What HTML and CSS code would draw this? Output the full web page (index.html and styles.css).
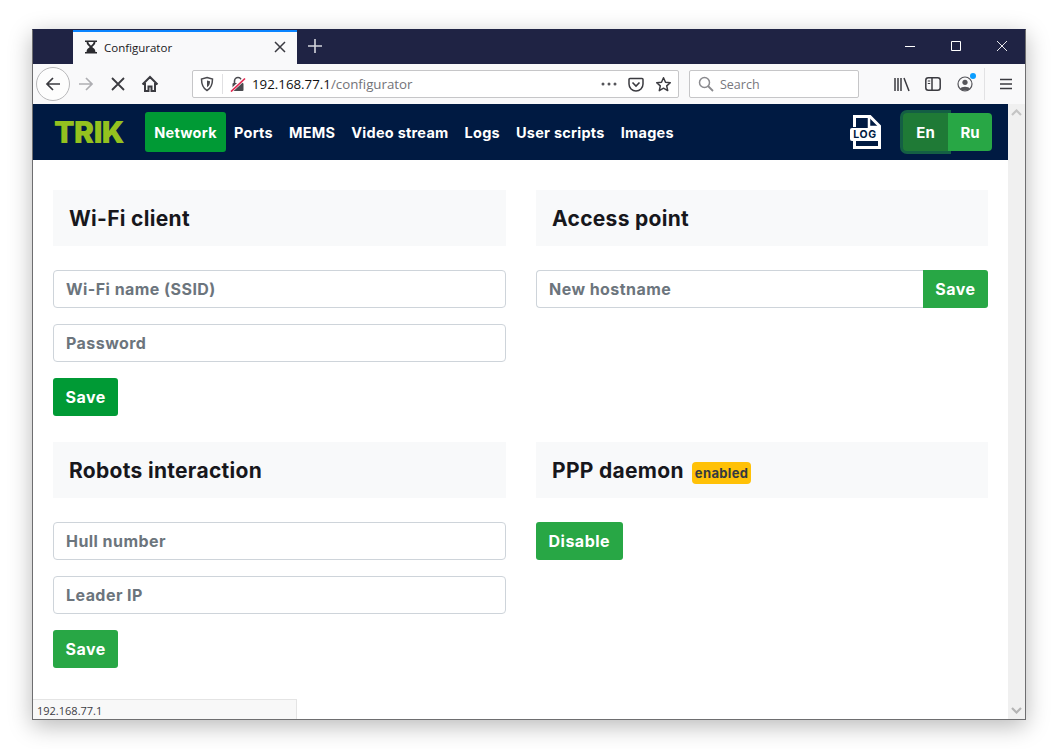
FILE: index.html
```html
<!DOCTYPE html>
<html lang="en">
<head>
  <meta charset="UTF-8">
  <title>Configurator</title>
  <link rel="stylesheet" href="styles.css">
</head>
<body>
  <div class="window">
    <div class="titlebar">
      <div class="tab">
        <svg class="tab-icon" width="16" height="16" viewBox="0 0 16 16"><path d="M2 1.500h12v1.600h-1.600c0 3-2 3.600-3.100 4.900 1.100 1.300 3.100 1.900 3.100 4.900H14v1.600H2v-1.600h1.600c0-3 2-3.600 3.100-4.900C5.600 6.700 3.600 6.100 3.600 3.100H2z" fill="#2a2a2e"/><path d="M5.400 3.100h5.200c0 1.500-1.500 2.600-2.600 3.700-1.100-1.100-2.600-2.200-2.600-3.700z" fill="#f9f9fa"/></svg>
        <span class="tab-title">Configurator</span>
        <svg class="tab-close" width="12" height="12" viewBox="0 0 12 12"><path d="M1 1l10 10M11 1L1 11" stroke="#3a3a40" stroke-width="1.500"/></svg>
      </div>
      <svg class="new-tab" width="16" height="16" viewBox="0 0 16 16"><path d="M8 1v14M1 8h14" stroke="#d4d5dc" stroke-width="1.600"/></svg>
      <div class="win-controls">
        <svg width="12" height="12" viewBox="0 0 12 12"><path d="M1 6.500h10" stroke="#fff"/></svg>
        <svg width="12" height="12" viewBox="0 0 12 12"><path d="M1.500 1.500h9v9h-9z" fill="none" stroke="#fff"/></svg>
        <svg width="12" height="12" viewBox="0 0 12 12"><path d="M1 1l10 10M11 1L1 11" stroke="#fff" stroke-width=".9"/></svg>
      </div>
    </div>

    <div class="toolbar">
      <div class="back-btn">
        <svg width="18" height="18" viewBox="0 0 18 18"><path d="M16 9H3M9 3L3 9l6 6" fill="none" stroke="#3b3b40" stroke-width="1.700"/></svg>
      </div>
      <svg class="forward" width="18" height="18" viewBox="0 0 18 18"><path d="M2 9h13M9 3l6 6-6 6" fill="none" stroke="#aeaeb2" stroke-width="1.700"/></svg>
      <svg class="stop" width="16" height="16" viewBox="0 0 16 16"><path d="M2 2l12 12M14 2L2 14" stroke="#3b3b40" stroke-width="1.800"/></svg>
      <svg class="home" width="18" height="18" viewBox="0 0 18 18"><path d="M1.500 9.500L9 2l7.500 7.500M4 8v8h3.500v-4.500h3V16H14V8" fill="none" stroke="#3b3b40" stroke-width="2"/></svg>

      <div class="urlbar">
        <svg class="shield" width="14" height="16" viewBox="0 0 14 16"><path d="M7 1.500l5.500 1.500c0 5-1 9-5.500 11.500C2.500 12 1.500 8 1.500 3z" fill="none" stroke="#4a4a4f" stroke-width="1.500"/><path d="M7 4.500l3 .8c0 2.500-.6 4.700-3 6z" fill="#4a4a4f"/></svg>
        <span class="url-sep"></span>
        <svg class="lock" width="16" height="16" viewBox="0 0 16 16"><path d="M4.500 7V5a3.500 3.500 0 0 1 7 0v2" fill="none" stroke="#4a4a4f" stroke-width="1.600"/><rect x="2.500" y="7" width="11" height="8" rx="1" fill="#4a4a4f"/><path d="M1 15L15 2" stroke="#fff" stroke-width="3.500"/><path d="M1 15.500L15 2.500" stroke="#e22850" stroke-width="1.700"/></svg>
        <span class="url"><span class="url-host">192.168.77.1</span>/configurator</span>
        <svg class="dots" width="16" height="4" viewBox="0 0 16 4"><circle cx="2" cy="2" r="1.500"/><circle cx="8" cy="2" r="1.500"/><circle cx="14" cy="2" r="1.500"/></svg>
        <svg class="pocket" width="16" height="15" viewBox="0 0 16 15"><path d="M1 2.500a1 1 0 0 1 1-1h12a1 1 0 0 1 1 1V7a7 7 0 0 1-14 0z" fill="none" stroke="#3b3b40" stroke-width="1.500"/><path d="M4.500 5.500L8 9l3.500-3.500" fill="none" stroke="#3b3b40" stroke-width="1.600"/></svg>
        <svg class="star" width="17" height="17" viewBox="0 0 17 17"><path d="M8.500 1.800l2 4.400 4.800.5-3.600 3.200 1 4.700-4.200-2.400-4.200 2.400 1-4.700L1.700 6.700l4.800-.5z" fill="none" stroke="#3b3b40" stroke-width="1.500" stroke-linejoin="round"/></svg>
      </div>

      <div class="searchbar">
        <svg width="16" height="16" viewBox="0 0 16 16"><circle cx="6.500" cy="6.500" r="5" fill="none" stroke="#8a8a8e" stroke-width="1.500"/><path d="M10 10l5 5" stroke="#8a8a8e" stroke-width="1.800"/></svg>
        <span>Search</span>
      </div>

      <div class="tool-icons">
        <svg width="16" height="15" viewBox="0 0 16 15"><path d="M1 1v13M4 1v13M7 1v13M10 1l5 13" fill="none" stroke="#3b3b40" stroke-width="1.500"/></svg>
        <svg class="sidebar-icon" width="16" height="14" viewBox="0 0 16 14"><rect x=".8" y=".8" width="14.400" height="12.400" rx="2.500" fill="none" stroke="#3b3b40" stroke-width="1.500"/><path d="M7 1v12" stroke="#3b3b40" stroke-width="1.500"/><path d="M2.800 4h2.400M2.800 6.500h2.400" stroke="#3b3b40"/></svg>
        <div class="account">
          <svg width="16" height="16" viewBox="0 0 16 16"><circle cx="8" cy="8" r="7" fill="none" stroke="#55555a" stroke-width="1.200"/><circle cx="8" cy="6.300" r="2.600" fill="#55555a"/><path d="M3 13c1-3 9-3 10 0-2.500 2-7.500 2-10 0z" fill="#55555a"/></svg>
          <span class="account-dot"></span>
        </div>
        <span class="tool-sep"></span>
        <svg width="14" height="12" viewBox="0 0 14 12"><path d="M1 1.500h12M1 6h12M1 10.500h12" stroke="#3b3b40" stroke-width="1.500"/></svg>
      </div>
    </div>

    <div class="viewport">
      <div class="page">
        <nav class="navbar">
          <span class="logo">TRIK</span>
          <a class="nav-link active">Network</a>
          <a class="nav-link">Ports</a>
          <a class="nav-link">MEMS</a>
          <a class="nav-link">Video stream</a>
          <a class="nav-link">Logs</a>
          <a class="nav-link">User scripts</a>
          <a class="nav-link">Images</a>
          <div class="nav-right">
            <div class="log-icon">
              <svg width="31" height="34" viewBox="0 0 31 34"><path d="M4.500 12V1.500H20L29.500 11v21.500h-25V24" fill="none" stroke="#fff" stroke-width="3"/><path d="M19 2v10h10" fill="none" stroke="#fff" stroke-width="2.500"/><rect x="0" y="13" width="30" height="13" rx="2" fill="#fff"/></svg>
              <span class="log-text">LOG</span>
            </div>
            <div class="lang-group">
              <button class="lang-btn lang-active">En</button>
              <button class="lang-btn">Ru</button>
            </div>
          </div>
        </nav>

        <main class="content">
          <section class="card">
            <h2 class="card-title">Wi-Fi client</h2>
            <input class="field" type="text" placeholder="Wi-Fi name (SSID)">
            <input class="field" type="text" placeholder="Password">
            <button class="btn btn-active">Save</button>
          </section>

          <section class="card">
            <h2 class="card-title">Access point</h2>
            <div class="input-group">
              <input class="field" type="text" placeholder="New hostname">
              <button class="btn">Save</button>
            </div>
          </section>

          <section class="card">
            <h2 class="card-title">Robots interaction</h2>
            <input class="field" type="text" placeholder="Hull number">
            <input class="field" type="text" placeholder="Leader IP">
            <button class="btn">Save</button>
          </section>

          <section class="card">
            <h2 class="card-title">PPP daemon <span class="badge">enabled</span></h2>
            <button class="btn">Disable</button>
          </section>
        </main>
      </div>

      <div class="scrollbar">
        <svg width="11" height="7" viewBox="0 0 11 7"><path d="M1 6l4.500-4.500L10 6" fill="none" stroke="#c4c4c4" stroke-width="2.200"/></svg>
        <svg width="11" height="7" viewBox="0 0 11 7"><path d="M1 1l4.500 4.500L10 1" fill="none" stroke="#b4b4b4" stroke-width="2.200"/></svg>
      </div>

      <div class="status-panel">192.168.77.1</div>
    </div>
  </div>
</body>
</html>
```

FILE: styles.css
```css
html, body {
  margin: 0;
  height: 100%;
  background: #fff;
  overflow: hidden;
}

body {
  padding: 29px 0 0 32px;
  box-sizing: border-box;
  font-family: 'Inter', sans-serif;
}

.window {
  width: 994px;
  height: 691px;
  box-sizing: border-box;
  border: 1px solid #6e6e70;
  border-top-color: #1f2344;
  display: flex;
  flex-direction: column;
  box-shadow: 0 6px 22px rgba(0,0,0,0.28);
}

/* browser chrome */
.titlebar {
  height: 34px;
  flex: none;
  background: #1f2344;
  display: flex;
  align-items: center;
  padding-left: 40px;
}

.tab {
  width: 224px;
  height: 34px;
  box-sizing: border-box;
  background: #f9f9fa;
  border-top: 2px solid #0a84ff;
  display: flex;
  align-items: center;
  padding: 0 11px 2px 10px;
  font-family: 'Open Sans', sans-serif;
  font-size: 11.500px;
  color: #18181b;
}

.tab-title {
  margin-left: 5px;
  flex: 1;
}

.new-tab {
  margin: 0 0 2px 10px;
}

.win-controls {
  margin-left: auto;
  display: flex;
  gap: 34px;
  padding: 0 17px 3px 0;
}

.toolbar {
  height: 40px;
  flex: none;
  box-sizing: border-box;
  background: #f9f9fa;
  display: flex;
  align-items: center;
  padding-left: 3px;
}

.back-btn {
  width: 32px;
  height: 32px;
  border: 1px solid #b8b8ba;
  border-radius: 50%;
  background: #fdfdfd;
  display: flex;
  align-items: center;
  justify-content: center;
}

.forward {
  margin-left: 7px;
}

.stop {
  margin-left: 15px;
}

.home {
  margin-left: 15px;
}

.urlbar {
  width: 487px;
  height: 28px;
  margin-left: 33px;
  box-sizing: border-box;
  background: #fff;
  border: 1px solid #c6c6c8;
  border-radius: 2px;
  display: flex;
  align-items: center;
  padding: 0 6px 0 7px;
}

.url-sep {
  width: 1px;
  height: 20px;
  background: #e0e0e2;
  margin: 0 7px 0 8px;
}

.url {
  margin-left: 6px;
  flex: 1;
  font-family: 'Open Sans', sans-serif;
  font-size: 13.300px;
  color: #737378;
}

.url-host {
  color: #111;
}

.dots {
  fill: #55555a;
  margin-right: 11px;
}

.star {
  margin-left: 11px;
}

.searchbar {
  width: 170px;
  height: 28px;
  margin-left: 10px;
  box-sizing: border-box;
  background: #fff;
  border: 1px solid #c6c6c8;
  border-radius: 2px;
  display: flex;
  align-items: center;
  gap: 6px;
  padding-left: 8px;
  font-family: 'Open Sans', sans-serif;
  font-size: 12.500px;
  color: #77777c;
}

.tool-icons {
  display: flex;
  align-items: center;
  margin-left: 35px;
}

.sidebar-icon {
  margin-left: 15px;
}

.account {
  margin-left: 16px;
  position: relative;
  display: flex;
}

.account-dot {
  position: absolute;
  top: -3px;
  right: -3px;
  width: 6px;
  height: 6px;
  border-radius: 50%;
  background: #0a9dff;
}

.tool-sep {
  width: 1px;
  height: 32px;
  background: #e2e2e4;
  margin: 0 14px 0 11px;
}

/* page */
.viewport {
  flex: 1;
  min-height: 0;
  display: flex;
  position: relative;
}

.page {
  flex: 1;
  min-width: 0;
  background: #fff;
}

.navbar {
  height: 56px;
  background: #001a42;
  display: flex;
  align-items: center;
  padding-left: 21px;
}

.logo {
  width: 91px;
  font-size: 30px;
  font-weight: 900;
  letter-spacing: -0.5px;
  color: #94c11f;
}

.nav-link {
  padding: 0 8px;
  height: 40px;
  line-height: 41px;
  border-radius: 3px;
  font-size: 14.500px;
  font-weight: 700;
  letter-spacing: .25px;
  color: #fff;
}

.nav-link.active {
  width: 65px;
  background: #009a35;
  text-align: center;
}

.nav-right {
  margin-left: auto;
  display: flex;
  align-items: center;
  padding-right: 16px;
}

.log-icon {
  width: 31px;
  height: 34px;
  position: relative;
  margin-right: 22px;
}

.log-text {
  position: absolute;
  left: 0;
  right: 1px;
  top: 13px;
  line-height: 13px;
  text-align: center;
  font-size: 10.500px;
  font-weight: 700;
  letter-spacing: .6px;
  color: #001a42;
}

.lang-group {
  display: flex;
}

.lang-btn {
  width: 44px;
  height: 38px;
  padding: 0;
  border: 0;
  border-radius: 0 4px 4px 0;
  background: #28a745;
  color: #fff;
  font-family: inherit;
  font-size: 15px;
  font-weight: 700;
}

.lang-btn.lang-active {
  width: 45px;
  background: #1f7a36;
  border-radius: 4px 0 0 4px;
  box-shadow: 0 0 0 3px #145f44;
}

.content {
  display: grid;
  grid-template-columns: 453px 452px;
  column-gap: 30px;
  padding: 30px 20px 0;
  align-content: start;
}

.card {
  display: flex;
  flex-direction: column;
  align-items: flex-start;
  height: 252px;
}

.card-title {
  width: 100%;
  height: 56px;
  margin: 0 0 24px;
  padding: 0 16px;
  box-sizing: border-box;
  background: #f8f9fa;
  display: flex;
  align-items: center;
  gap: 8px;
  font-size: 21px;
  font-weight: 700;
  letter-spacing: .3px;
  color: #17171c;
}

.field {
  width: 100%;
  height: 38px;
  margin-bottom: 16px;
  padding: 0 12px;
  box-sizing: border-box;
  border: 1px solid #ced4da;
  border-radius: 4px;
  font-family: inherit;
  font-size: 16px;
  font-weight: 700;
  letter-spacing: .45px;
}

.field::placeholder {
  color: #6c757d;
  opacity: 1;
}

.btn {
  height: 38px;
  padding: 0 12.500px;
  border: 0;
  border-radius: 3px;
  background: #28a745;
  color: #fff;
  font-family: inherit;
  font-size: 16px;
  font-weight: 700;
  letter-spacing: .5px;
}

.btn-active {
  background: #009a35;
}

.input-group {
  display: flex;
  width: 100%;
}

.input-group .field {
  flex: 1;
  border-radius: 4px 0 0 4px;
  border-right: 0;
  margin: 0;
}

.input-group .btn {
  border-radius: 0 3px 3px 0;
}

.badge {
  margin-top: 5px;
  padding: 3px;
  border-radius: 4px;
  background: #ffc107;
  font-size: 13px;
  font-weight: 700;
  letter-spacing: .35px;
  color: #343a40;
}

.scrollbar {
  width: 17px;
  flex: none;
  background: #f0f0f0;
  display: flex;
  flex-direction: column;
  justify-content: space-between;
  align-items: center;
  padding: 5px 0;
  box-sizing: border-box;
}

.status-panel {
  position: absolute;
  left: 0;
  bottom: 0;
  width: 264px;
  height: 20px;
  box-sizing: border-box;
  background: #f8f8f8;
  border-top: 1px solid #e4e4e4;
  border-right: 1px solid #e4e4e4;
  padding-left: 4px;
  font-family: 'Open Sans', sans-serif;
  font-size: 11px;
  line-height: 21px;
  color: #3c3c44;
}
```
